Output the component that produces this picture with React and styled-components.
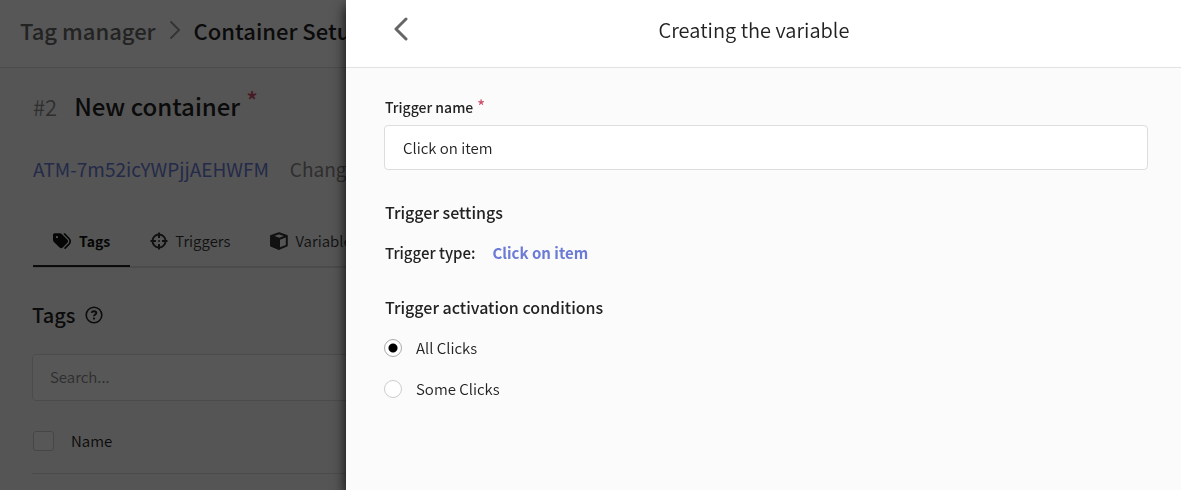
import React, { useState } from 'react';
import styled, { createGlobalStyle } from 'styled-components';
import { FaTags } from 'react-icons/fa6';

const GlobalStyle = createGlobalStyle`
  * {
    box-sizing: border-box;
  }
  body {
    margin: 0;
    overflow: hidden;
    background: #fafafa;
    color: #222;
    font-family: 'Noto Sans CJK SC', 'Open Sans', sans-serif;
    font-size: 15px;
    font-weight: 350;
    line-height: 24px;
  }
  input,
  button {
    font: inherit;
    color: inherit;
  }
`;

const ChevronRight = () => (
  <svg width="12" height="20" viewBox="0 0 12 20" fill="none" stroke="#999" strokeWidth="2" strokeLinecap="round">
    <path d="M2 2l8 8-8 8" />
  </svg>
);

const ChevronLeft = () => (
  <svg width="14" height="24" viewBox="0 0 14 24" fill="none" stroke="#666" strokeWidth="3" strokeLinecap="round" strokeLinejoin="round">
    <path d="M12 2L2 12l10 10" />
  </svg>
);

const TargetIcon = () => (
  <svg width="18" height="18" viewBox="0 0 18 18" fill="none" stroke="currentColor" strokeWidth="2">
    <circle cx="9" cy="9" r="6.500" />
    <path d="M9 .5v5.500M9 12v5.500M.5 9H6M12 9h5.500" />
    <circle cx="9" cy="9" r="1" fill="currentColor" stroke="none" />
  </svg>
);

const CubeIcon = () => (
  <svg width="18" height="18" viewBox="0 0 18 18" fill="none" stroke="currentColor" strokeWidth="2" strokeLinejoin="round">
    <path d="M9 1.200l7.800 2.800v9.600L9 16.800l-7.800-3.200V4z" />
    <path d="M1.200 4L9 7 16.800 4M9 7v9.800" />
    <path d="M1.200 4L9 7v9.800l-7.800-3.200z" fill="currentColor" />
  </svg>
);

const HelpIcon = () => (
  <svg width="18" height="18" viewBox="0 0 18 18" fill="none" stroke="#222" strokeWidth="1.600">
    <circle cx="9" cy="9" r="7.800" />
    <path d="M6.600 6.900C6.800 5.800 7.700 5.200 9 5.200s2.300.7 2.300 1.800c0 1.500-2.300 1.500-2.300 3.200" strokeWidth="1.900" />
    <circle cx="9" cy="12.600" r="1.100" fill="#222" stroke="none" />
  </svg>
);

const App = () => {
  const [name, setName] = useState('Click on item');
  const [condition, setCondition] = useState('all');

  return (
    <>
      <GlobalStyle />
      <Page>
        <TopBar>
          <Crumb href="#">Tag manager</Crumb>
          <ChevronRight />
          <CurrentCrumb>Container Setup</CurrentCrumb>
        </TopBar>
        <Content>
          <ContainerTitle>
            <Number>#2</Number>
            <h1>New container</h1>
            <Star $big>*</Star>
          </ContainerTitle>
          <ContainerMeta>
            <a href="#">ATM-7m52icYWPjjAEHWFM</a>
            <span>Changed</span>
          </ContainerMeta>
          <Tabs>
            <Tab $active>
              <FaTags size={18} />
              Tags
            </Tab>
            <Tab>
              <TargetIcon />
              Triggers
            </Tab>
            <Tab>
              <CubeIcon />
              Variables
            </Tab>
          </Tabs>
          <ListTitle>
            Tags
            <HelpIcon />
          </ListTitle>
          <Search type="text" placeholder="Search..." aria-label="Search" />
          <ListHead>
            <Checkbox type="checkbox" />
            Name
          </ListHead>
        </Content>
      </Page>
      <Backdrop />
      <Drawer>
        <DrawerHeader>
          <BackButton aria-label="Back">
            <ChevronLeft />
          </BackButton>
          <DrawerTitle>Creating the variable</DrawerTitle>
        </DrawerHeader>
        <Form>
          <Label htmlFor="trigger-name">
            Trigger name
            <Star>*</Star>
          </Label>
          <TextInput id="trigger-name" type="text" value={name} onChange={(e) => setName(e.target.value)} />
          <SectionTitle>Trigger settings</SectionTitle>
          <TypeRow>
            Trigger type:
            <a href="#">Click on item</a>
          </TypeRow>
          <SectionTitle>Trigger activation conditions</SectionTitle>
          <RadioRow>
            <Radio type="radio" name="condition" checked={condition === 'all'} onChange={() => setCondition('all')} />
            All Clicks
          </RadioRow>
          <RadioRow>
            <Radio type="radio" name="condition" checked={condition === 'some'} onChange={() => setCondition('some')} />
            Some Clicks
          </RadioRow>
        </Form>
      </Drawer>
    </>
  );
};

const Page = styled.div`
  min-height: 100vh;
`;

const TopBar = styled.header`
  display: flex;
  align-items: center;
  gap: 13px;
  height: 68px;
  padding: 0 20px 7px;
  background: #fff;
  border-bottom: 1px solid #ddd;
  font-size: 22px;
  font-weight: 500;
  white-space: nowrap;
`;

const Crumb = styled.a`
  color: #666;
  text-decoration: none;
`;

const CurrentCrumb = styled.span`
  color: #222;
`;

const Content = styled.main`
  padding: 18px 32px;
`;

const ContainerTitle = styled.div`
  display: flex;
  align-items: center;
  height: 40px;
  padding-left: 1px;
  font-size: 22px;

  h1 {
    margin: 0 6px 0 17px;
    font-size: 24px;
    font-weight: 500;
  }
`;

const Number = styled.span`
  color: #888;
`;

const Star = styled.span`
  align-self: flex-start;
  margin-left: ${(props) => (props.$big ? '0' : '4px')};
  color: #d0506a;
  font-size: ${(props) => (props.$big ? '24px' : '16px')};
  font-weight: 500;
  line-height: ${(props) => (props.$big ? '28px' : '20px')};
`;

const ContainerMeta = styled.div`
  display: flex;
  align-items: center;
  gap: 21px;
  height: 24px;
  margin-top: 31px;
  padding-left: 1px;
  color: #888;
  font-size: 19px;
  font-weight: 400;

  a {
    color: #6b7bd6;
    text-decoration: none;
  }
`;

const Tabs = styled.nav`
  display: flex;
  height: 54px;
  margin: 33px 0 0 1px;
  border-bottom: 2px solid #ddd;
`;

const Tab = styled.button`
  display: flex;
  align-items: center;
  gap: ${(props) => (props.$active ? '8px' : '7px')};
  height: 53px;
  padding: 2px 20px 0;
  border: none;
  border-bottom: 2px solid ${(props) => (props.$active ? '#222' : 'transparent')};
  background: none;
  color: ${(props) => (props.$active ? '#111' : '#333')};
  font-size: ${(props) => (props.$active ? '14px' : '15px')};
  font-weight: ${(props) => (props.$active ? 700 : 350)};
`;

const ListTitle = styled.h2`
  display: flex;
  align-items: center;
  gap: 10px;
  height: 24px;
  margin: 35px 0 27px;
  font-size: 20px;
  font-weight: 500;
`;

const Search = styled.input`
  display: block;
  width: 100%;
  height: 47px;
  padding: 0 17px 2px;
  border: 1px solid #ddd;
  border-radius: 4px;
  background: #fff;

  &::placeholder {
    color: #888;
  }
`;

const ListHead = styled.label`
  display: flex;
  align-items: center;
  gap: 17px;
  height: 73px;
  padding: 8px 1px 0;
  border-bottom: 1px solid #ddd;
`;

const Checkbox = styled.input`
  appearance: none;
  width: 21px;
  height: 20px;
  margin: 0;
  border: 1px solid #ccc;
  border-radius: 3px;
  background: #fff;
`;

const Backdrop = styled.div`
  position: fixed;
  inset: 0;
  background: rgba(0, 0, 0, 0.66);
`;

const Drawer = styled.aside`
  position: fixed;
  inset: 0 0 0 346px;
  background: #fbfbfb;
  box-shadow: 0 6px 12px rgba(0, 0, 0, 0.9);
`;

const DrawerHeader = styled.header`
  display: grid;
  grid-template-columns: 40px 1fr 40px;
  align-items: center;
  height: 68px;
  padding: 0 54px 8px 35px;
  background: #fff;
  border-bottom: 1px solid #e2e2e2;
`;

const BackButton = styled.button`
  display: flex;
  justify-content: center;
  padding: 0 0 2px;
  border: none;
  background: none;
  cursor: pointer;
`;

const DrawerTitle = styled.h2`
  margin: 0;
  text-align: center;
  font-size: 20px;
  font-weight: 350;
`;

const Form = styled.form`
  padding: 27px 33px 0 38px;
`;

const Label = styled.label`
  display: flex;
  height: 24px;
  margin-bottom: 6px;
  padding-left: 1px;
  font-size: 14px;
  font-weight: 500;
`;

const TextInput = styled.input`
  display: block;
  width: 100%;
  height: 45px;
  padding: 0 18px;
  border: 1px solid #ddd;
  border-radius: 4px;
  background: #fff;
`;

const SectionTitle = styled.h3`
  margin: 30px 0 17px;
  padding-left: 1px;
  font-size: 16px;
  font-weight: 500;
`;

const TypeRow = styled.div`
  display: flex;
  gap: 17px;
  padding-left: 1px;
  font-weight: 500;

  a {
    color: #6b7bd6;
    font-weight: 700;
    text-decoration: none;
  }
`;

const RadioRow = styled.label`
  display: flex;
  align-items: center;
  gap: 14px;
  height: 24px;
  margin-bottom: 17px;
`;

const Radio = styled.input`
  appearance: none;
  width: 18px;
  height: 18px;
  margin: 0;
  border: 1px solid #ccc;
  border-radius: 50%;
  background: #fff;

  &:checked {
    border-color: #aaa;
    background: radial-gradient(circle, #000 4px, #fff 5px);
  }
`;

export default App;
